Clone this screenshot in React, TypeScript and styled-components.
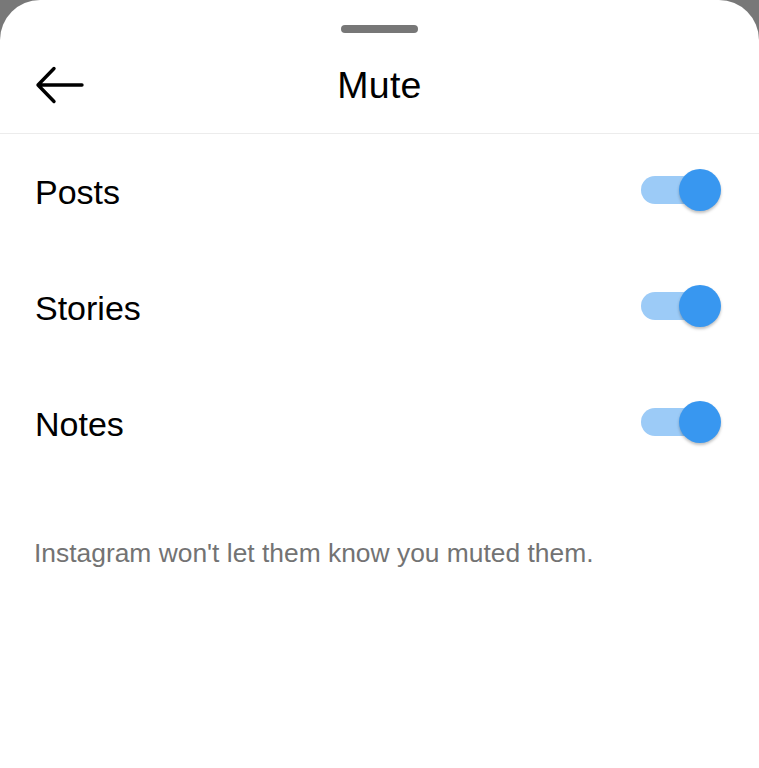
import React, { useState } from 'react';
import styled, { createGlobalStyle } from 'styled-components';

const GlobalStyle = createGlobalStyle`
  html, body {
    margin: 0;
    padding: 0;
    background: #787878;
    font-family: "Liberation Sans", Arial, sans-serif;
  }
`;

const Sheet = styled.div({
  width: '759px',
  height: '768px',
  background: '#fff',
  borderRadius: '40px 40px 0 0',
  overflow: 'hidden',
  display: 'flex',
  flexDirection: 'column',
});

const Handle = styled.div({
  width: '77px',
  height: '8px',
  borderRadius: '4px',
  background: '#777',
  margin: '25px auto 0',
});

const Header = styled.div({
  height: '99px',
  display: 'grid',
  gridTemplateColumns: '120px 1fr 120px',
  alignItems: 'center',
  borderBottom: '1px solid #ececec',
  paddingBottom: '1px',
});

const BackButton = styled.button({
  background: 'none',
  border: 'none',
  padding: '0 0 0 35px',
  margin: 0,
  display: 'flex',
  alignItems: 'center',
  cursor: 'pointer',
  marginTop: '6px',
});

const Title = styled.h1({
  margin: '6px 0 0',
  fontSize: '37.5px',
  fontWeight: 400,
  textAlign: 'center',
  color: '#000',
  letterSpacing: '0.3px',
});

const List = styled.div({
  display: 'flex',
  flexDirection: 'column',
});

const Row = styled.div({
  height: '116px',
  display: 'flex',
  alignItems: 'center',
  justifyContent: 'space-between',
  padding: '0 54px 0 35px',
});

const Label = styled.span({
  fontSize: '34px',
  color: '#000',
  marginTop: '0px',
});

const Track = styled.button<{ $on: boolean }>(({ $on }) => ({
  position: 'relative',
  width: '64px',
  height: '28px',
  borderRadius: '14px',
  border: 'none',
  padding: 0,
  cursor: 'pointer',
  background: $on ? '#9ccbf7' : '#dbdbdb',
  marginTop: '-4px',
}));

const Knob = styled.span<{ $on: boolean }>(({ $on }) => ({
  position: 'absolute',
  top: '-7px',
  left: $on ? '38px' : '-4px',
  width: '42px',
  height: '42px',
  borderRadius: '50%',
  background: $on ? '#3897f0' : '#fafafa',
  boxShadow: '0 2px 3px rgba(0,0,0,0.25)',
}));

const Note = styled.p({
  margin: '56px 0 0 34px',
  fontSize: '26.4px',
  color: '#737373',
});

const BackArrow = () => (
  <svg width="50" height="40" viewBox="0 0 50 40" fill="none">
    <path
      d="M3 19 H47 M19 2.5 L3 19 L19 35.5"
      stroke="#000"
      strokeWidth="3.4"
      strokeLinecap="round"
      strokeLinejoin="round"
    />
  </svg>
);

const Toggle: React.FC<{ on: boolean; onChange: () => void }> = ({ on, onChange }) => (
  <Track $on={on} onClick={onChange} aria-pressed={on}>
    <Knob $on={on} />
  </Track>
);

export default function App() {
  const [muted, setMuted] = useState({ Posts: true, Stories: true, Notes: true });
  const items = Object.keys(muted) as (keyof typeof muted)[];

  return (
    <>
      <GlobalStyle />
      <Sheet>
        <Handle />
        <Header>
          <BackButton aria-label="Back">
            <BackArrow />
          </BackButton>
          <Title>Mute</Title>
          <span />
        </Header>
        <List>
          {items.map(k => (
            <Row key={k}>
              <Label>{k}</Label>
              <Toggle on={muted[k]} onChange={() => setMuted({ ...muted, [k]: !muted[k] })} />
            </Row>
          ))}
        </List>
        <Note>Instagram won't let them know you muted them.</Note>
      </Sheet>
    </>
  );
}
